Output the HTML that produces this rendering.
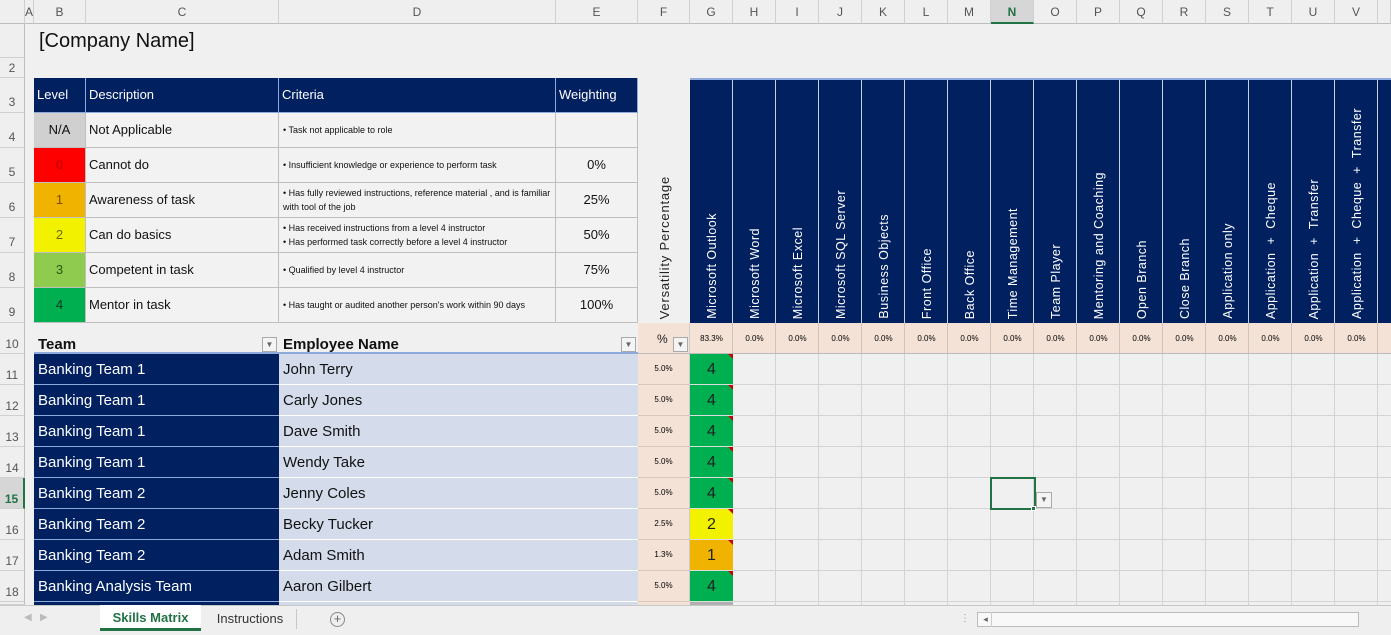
<!DOCTYPE html>
<html><head><meta charset="utf-8"><style>
*{margin:0;padding:0;box-sizing:border-box}
body{width:1391px;height:635px;overflow:hidden;background:#f0f0f0;font-family:"Liberation Sans",sans-serif;position:relative}
.c{position:absolute;overflow:hidden;white-space:nowrap}
.hd{top:0;height:24px;background:#efefef;border-right:1px solid #d0d0d0;border-bottom:1px solid #bdbdbd;color:#555;font-size:12px;text-align:center;line-height:24px}
.rh{left:0;width:25px;background:#efefef;border-bottom:1px solid #d0d0d0;border-right:1px solid #bdbdbd;color:#555;font-size:12px;text-align:center;padding-top:14px}
.nv{background:#002060;color:#fff}
.lg{border-right:1px solid #bfbfbf;border-bottom:1px solid #bfbfbf;font-size:13px;line-height:34px;padding-left:3px;background:#f2f2f2;color:#111}
.cr{font-size:9px;line-height:14px;padding:3px 4px;white-space:normal;display:flex;flex-direction:column;justify-content:center}
.vh{writing-mode:vertical-rl;transform:rotate(180deg);font-size:12.5px;letter-spacing:0.5px;color:#fff;padding-top:4px;text-align:left;white-space:nowrap;display:block}
.tm{background:#002060;color:#fff;font-size:15px;padding-left:4px;line-height:32px;border-bottom:1px solid #8ea9db}
.em{background:#d4dcec;color:#111;font-size:15px;padding-left:4px;line-height:32px;border-bottom:1px solid #fff}
.pc{background:#f4e2d6;font-size:8px;text-align:center;line-height:30px;border-right:1px solid #ccc;border-bottom:1px solid #d8c8bc}
.sk{font-size:16px;text-align:center;line-height:32px;border-bottom:1px solid #ddd;color:#222}
.tri:after{content:"";position:absolute;right:0;top:0;border-top:5px solid #c00;border-left:5px solid transparent}
</style></head><body>
<div class="c hd" style="left:0;width:25px"></div>
<div class="c hd" style="left:25px;width:9px">A</div>
<div class="c hd" style="left:34px;width:52px">B</div>
<div class="c hd" style="left:86px;width:193px">C</div>
<div class="c hd" style="left:279px;width:277px">D</div>
<div class="c hd" style="left:556px;width:82px">E</div>
<div class="c hd" style="left:638px;width:52px">F</div>
<div class="c hd" style="left:690px;width:43px">G</div>
<div class="c hd" style="left:733px;width:43px">H</div>
<div class="c hd" style="left:776px;width:43px">I</div>
<div class="c hd" style="left:819px;width:43px">J</div>
<div class="c hd" style="left:862px;width:43px">K</div>
<div class="c hd" style="left:905px;width:43px">L</div>
<div class="c hd" style="left:948px;width:43px">M</div>
<div class="c hd" style="left:991px;width:43px;background:#d6d6d6;color:#217346;font-weight:bold;border-bottom:2px solid #217346">N</div>
<div class="c hd" style="left:1034px;width:43px">O</div>
<div class="c hd" style="left:1077px;width:43px">P</div>
<div class="c hd" style="left:1120px;width:43px">Q</div>
<div class="c hd" style="left:1163px;width:43px">R</div>
<div class="c hd" style="left:1206px;width:43px">S</div>
<div class="c hd" style="left:1249px;width:43px">T</div>
<div class="c hd" style="left:1292px;width:43px">U</div>
<div class="c hd" style="left:1335px;width:43px">V</div>
<div class="c hd" style="left:1378px;width:13px"></div>
<div class="c rh" style="top:24px;height:34px;padding-top:0"></div>
<div class="c rh" style="top:58px;height:20px;padding-top:3px">2</div>
<div class="c rh" style="top:78px;height:35px;padding-top:17px">3</div>
<div class="c rh" style="top:113px;height:35px;padding-top:17px">4</div>
<div class="c rh" style="top:148px;height:35px;padding-top:17px">5</div>
<div class="c rh" style="top:183px;height:35px;padding-top:17px">6</div>
<div class="c rh" style="top:218px;height:35px;padding-top:17px">7</div>
<div class="c rh" style="top:253px;height:35px;padding-top:17px">8</div>
<div class="c rh" style="top:288px;height:35px;padding-top:17px">9</div>
<div class="c rh" style="top:323px;height:31px">10</div>
<div class="c rh" style="top:354px;height:31px">11</div>
<div class="c rh" style="top:385px;height:31px">12</div>
<div class="c rh" style="top:416px;height:31px">13</div>
<div class="c rh" style="top:447px;height:31px">14</div>
<div class="c rh" style="top:478px;height:31px;background:#d6d6d6;color:#217346;font-weight:bold;border-right:2px solid #217346">15</div>
<div class="c rh" style="top:509px;height:31px">16</div>
<div class="c rh" style="top:540px;height:31px">17</div>
<div class="c rh" style="top:571px;height:31px">18</div>
<div class="c rh" style="top:602px;height:3px;padding:0"></div>

<div class="c" style="left:39px;top:30px;font-size:20px;color:#111">[Company Name]</div>

<div class="c" style="left:34px;top:78px;width:604px;height:245px;border-left:1px solid #bfbfbf"></div>
<div class="c lg" style="left:34px;top:78px;width:52px;height:35px;background:#002060;color:#fff;border-color:#8ea9db">Level</div>
<div class="c lg" style="left:86px;top:78px;width:193px;height:35px;background:#002060;color:#fff;border-color:#8ea9db">Description</div>
<div class="c lg" style="left:279px;top:78px;width:277px;height:35px;background:#002060;color:#fff;border-color:#8ea9db">Criteria</div>
<div class="c lg" style="left:556px;top:78px;width:82px;height:35px;background:#002060;color:#fff;border-color:#8ea9db">Weighting</div>

<div class="c lg" style="left:34px;top:113px;width:52px;height:35px;background:#d0d0d0;text-align:center;padding:0">N/A</div>
<div class="c lg" style="left:86px;top:113px;width:193px;height:35px">Not Applicable</div>
<div class="c lg cr" style="left:279px;top:113px;width:277px;height:35px">• Task not applicable to role</div>
<div class="c lg" style="left:556px;top:113px;width:82px;height:35px"></div>

<div class="c lg" style="left:34px;top:148px;width:52px;height:35px;background:#ff0000;color:#c00000;text-align:center;padding:0">0</div>
<div class="c lg" style="left:86px;top:148px;width:193px;height:35px">Cannot do</div>
<div class="c lg cr" style="left:279px;top:148px;width:277px;height:35px">• Insufficient knowledge or experience to perform task</div>
<div class="c lg" style="left:556px;top:148px;width:82px;height:35px;text-align:center;padding:0">0%</div>

<div class="c lg" style="left:34px;top:183px;width:52px;height:35px;background:#f0b400;color:#7a4a00;text-align:center;padding:0">1</div>
<div class="c lg" style="left:86px;top:183px;width:193px;height:35px">Awareness of task</div>
<div class="c lg cr" style="left:279px;top:183px;width:277px;height:35px">• Has fully reviewed instructions, reference material , and is familiar with tool of the job</div>
<div class="c lg" style="left:556px;top:183px;width:82px;height:35px;text-align:center;padding:0">25%</div>

<div class="c lg" style="left:34px;top:218px;width:52px;height:35px;background:#f2f200;color:#6a6a00;text-align:center;padding:0">2</div>
<div class="c lg" style="left:86px;top:218px;width:193px;height:35px">Can do basics</div>
<div class="c lg cr" style="left:279px;top:218px;width:277px;height:35px"><span>• Has received instructions from a level 4 instructor</span><span>• Has performed task correctly before a level 4 instructor</span></div>
<div class="c lg" style="left:556px;top:218px;width:82px;height:35px;text-align:center;padding:0">50%</div>

<div class="c lg" style="left:34px;top:253px;width:52px;height:35px;background:#8fcb4f;color:#2a5a10;text-align:center;padding:0">3</div>
<div class="c lg" style="left:86px;top:253px;width:193px;height:35px">Competent in task</div>
<div class="c lg cr" style="left:279px;top:253px;width:277px;height:35px">• Qualified by level 4 instructor</div>
<div class="c lg" style="left:556px;top:253px;width:82px;height:35px;text-align:center;padding:0">75%</div>

<div class="c lg" style="left:34px;top:288px;width:52px;height:35px;background:#00b050;color:#0a3a1a;text-align:center;padding:0">4</div>
<div class="c lg" style="left:86px;top:288px;width:193px;height:35px">Mentor in task</div>
<div class="c lg cr" style="left:279px;top:288px;width:277px;height:35px">• Has taught or audited another person's work within 90 days</div>
<div class="c lg" style="left:556px;top:288px;width:82px;height:35px;text-align:center;padding:0">100%</div>

<div class="c" style="left:638px;top:78px;width:52px;height:245px;display:flex;justify-content:center;align-items:flex-end"><span class="vh" style="color:#222;font-size:13px;letter-spacing:0.8px">Versatility Percentage</span></div>
<div class="c nv" style="left:690px;top:78px;width:701px;height:245px;border-top:2px solid #8ea9db;background:repeating-linear-gradient(90deg,#002060 0 42px,#c8d0e0 42px 43px)"></div>
<div class="c" style="left:690px;top:80px;width:43px;height:243px;display:flex;justify-content:center;align-items:flex-end"><span class="vh">Microsoft Outlook</span></div>
<div class="c" style="left:733px;top:80px;width:43px;height:243px;display:flex;justify-content:center;align-items:flex-end"><span class="vh">Microsoft Word</span></div>
<div class="c" style="left:776px;top:80px;width:43px;height:243px;display:flex;justify-content:center;align-items:flex-end"><span class="vh">Microsoft Excel</span></div>
<div class="c" style="left:819px;top:80px;width:43px;height:243px;display:flex;justify-content:center;align-items:flex-end"><span class="vh">Microsoft SQL Server</span></div>
<div class="c" style="left:862px;top:80px;width:43px;height:243px;display:flex;justify-content:center;align-items:flex-end"><span class="vh">Business Objects</span></div>
<div class="c" style="left:905px;top:80px;width:43px;height:243px;display:flex;justify-content:center;align-items:flex-end"><span class="vh">Front Office</span></div>
<div class="c" style="left:948px;top:80px;width:43px;height:243px;display:flex;justify-content:center;align-items:flex-end"><span class="vh">Back Office</span></div>
<div class="c" style="left:991px;top:80px;width:43px;height:243px;display:flex;justify-content:center;align-items:flex-end"><span class="vh">Time Management</span></div>
<div class="c" style="left:1034px;top:80px;width:43px;height:243px;display:flex;justify-content:center;align-items:flex-end"><span class="vh">Team Player</span></div>
<div class="c" style="left:1077px;top:80px;width:43px;height:243px;display:flex;justify-content:center;align-items:flex-end"><span class="vh">Mentoring and Coaching</span></div>
<div class="c" style="left:1120px;top:80px;width:43px;height:243px;display:flex;justify-content:center;align-items:flex-end"><span class="vh">Open Branch</span></div>
<div class="c" style="left:1163px;top:80px;width:43px;height:243px;display:flex;justify-content:center;align-items:flex-end"><span class="vh">Close Branch</span></div>
<div class="c" style="left:1206px;top:80px;width:43px;height:243px;display:flex;justify-content:center;align-items:flex-end"><span class="vh">Application only</span></div>
<div class="c" style="left:1249px;top:80px;width:43px;height:243px;display:flex;justify-content:center;align-items:flex-end"><span class="vh">Application &nbsp;+ &nbsp;Cheque</span></div>
<div class="c" style="left:1292px;top:80px;width:43px;height:243px;display:flex;justify-content:center;align-items:flex-end"><span class="vh">Application &nbsp;+ &nbsp;Transfer</span></div>
<div class="c" style="left:1335px;top:80px;width:43px;height:243px;display:flex;justify-content:center;align-items:flex-end"><span class="vh">Application &nbsp;+ &nbsp;Cheque &nbsp;+ &nbsp;Transfer</span></div>

<div class="c" style="left:34px;top:323px;width:604px;height:31px;border-bottom:2px solid #8ea9db"></div>
<div class="c" style="left:38px;top:336px;font-size:15px;font-weight:bold;color:#111">Team</div>
<div class="c" style="left:262px;top:337px;width:15px;height:15px;border:1px solid #aaa;background:#f4f4f4;font-size:8px;text-align:center;line-height:13px;color:#666">▼</div>
<div class="c" style="left:283px;top:336px;font-size:15px;font-weight:bold;color:#111">Employee Name</div>
<div class="c" style="left:621px;top:337px;width:15px;height:15px;border:1px solid #aaa;background:#f4f4f4;font-size:8px;text-align:center;line-height:13px;color:#666">▼</div>
<div class="c" style="left:690px;top:323px;width:701px;height:31px;background:repeating-linear-gradient(90deg,#f4e2d6 0 42px,#cfc3bb 42px 43px);border-bottom:1px solid #bbb"></div>
<div class="c" style="left:638px;top:323px;width:52px;height:31px;background:#f4e2d6;border-right:1px solid #ccc;border-bottom:1px solid #bbb"></div>
<div class="c" style="left:657px;top:332px;font-size:12px;color:#222">%</div>
<div class="c" style="left:673px;top:337px;width:15px;height:15px;border:1px solid #aaa;background:#f4f4f4;font-size:8px;text-align:center;line-height:13px;color:#666">▼</div>
<div class="c" style="left:690px;top:323px;width:43px;height:31px;font-size:8px;text-align:center;line-height:31px">83.3%</div>
<div class="c" style="left:733px;top:323px;width:645px;height:31px;display:flex;font-size:8px;line-height:31px"><span style="width:43px;text-align:center">0.0%</span><span style="width:43px;text-align:center">0.0%</span><span style="width:43px;text-align:center">0.0%</span><span style="width:43px;text-align:center">0.0%</span><span style="width:43px;text-align:center">0.0%</span><span style="width:43px;text-align:center">0.0%</span><span style="width:43px;text-align:center">0.0%</span><span style="width:43px;text-align:center">0.0%</span><span style="width:43px;text-align:center">0.0%</span><span style="width:43px;text-align:center">0.0%</span><span style="width:43px;text-align:center">0.0%</span><span style="width:43px;text-align:center">0.0%</span><span style="width:43px;text-align:center">0.0%</span><span style="width:43px;text-align:center">0.0%</span><span style="width:43px;text-align:center">0.0%</span></div>

<div class="c" style="left:733px;top:354px;width:658px;height:251px;background:repeating-linear-gradient(90deg,transparent 0 42px,#d4d4d4 42px 43px),repeating-linear-gradient(180deg,transparent 0 30px,#d4d4d4 30px 31px)"></div>

<div class="c tm" style="left:34px;top:354px;width:245px;height:31px">Banking Team 1</div>
<div class="c em" style="left:279px;top:354px;width:359px;height:31px">John Terry</div>
<div class="c pc" style="left:638px;top:354px;width:52px;height:31px">5.0%</div>
<div class="c sk tri" style="left:690px;top:354px;width:43px;height:31px;background:#00b050">4</div>

<div class="c tm" style="left:34px;top:385px;width:245px;height:31px">Banking Team 1</div>
<div class="c em" style="left:279px;top:385px;width:359px;height:31px">Carly Jones</div>
<div class="c pc" style="left:638px;top:385px;width:52px;height:31px">5.0%</div>
<div class="c sk tri" style="left:690px;top:385px;width:43px;height:31px;background:#00b050">4</div>

<div class="c tm" style="left:34px;top:416px;width:245px;height:31px">Banking Team 1</div>
<div class="c em" style="left:279px;top:416px;width:359px;height:31px">Dave Smith</div>
<div class="c pc" style="left:638px;top:416px;width:52px;height:31px">5.0%</div>
<div class="c sk tri" style="left:690px;top:416px;width:43px;height:31px;background:#00b050">4</div>

<div class="c tm" style="left:34px;top:447px;width:245px;height:31px">Banking Team 1</div>
<div class="c em" style="left:279px;top:447px;width:359px;height:31px">Wendy Take</div>
<div class="c pc" style="left:638px;top:447px;width:52px;height:31px">5.0%</div>
<div class="c sk tri" style="left:690px;top:447px;width:43px;height:31px;background:#00b050">4</div>

<div class="c tm" style="left:34px;top:478px;width:245px;height:31px">Banking Team 2</div>
<div class="c em" style="left:279px;top:478px;width:359px;height:31px">Jenny Coles</div>
<div class="c pc" style="left:638px;top:478px;width:52px;height:31px">5.0%</div>
<div class="c sk tri" style="left:690px;top:478px;width:43px;height:31px;background:#00b050">4</div>

<div class="c tm" style="left:34px;top:509px;width:245px;height:31px">Banking Team 2</div>
<div class="c em" style="left:279px;top:509px;width:359px;height:31px">Becky Tucker</div>
<div class="c pc" style="left:638px;top:509px;width:52px;height:31px">2.5%</div>
<div class="c sk tri" style="left:690px;top:509px;width:43px;height:31px;background:#f2f200">2</div>

<div class="c tm" style="left:34px;top:540px;width:245px;height:31px">Banking Team 2</div>
<div class="c em" style="left:279px;top:540px;width:359px;height:31px">Adam Smith</div>
<div class="c pc" style="left:638px;top:540px;width:52px;height:31px">1.3%</div>
<div class="c sk tri" style="left:690px;top:540px;width:43px;height:31px;background:#f0b400">1</div>

<div class="c tm" style="left:34px;top:571px;width:245px;height:31px">Banking Analysis Team</div>
<div class="c em" style="left:279px;top:571px;width:359px;height:31px">Aaron Gilbert</div>
<div class="c pc" style="left:638px;top:571px;width:52px;height:31px">5.0%</div>
<div class="c sk tri" style="left:690px;top:571px;width:43px;height:31px;background:#00b050">4</div>

<div class="c" style="left:34px;top:602px;width:245px;height:3px;background:#002060"></div>
<div class="c" style="left:279px;top:602px;width:359px;height:3px;background:#d4dcec"></div>
<div class="c" style="left:638px;top:602px;width:52px;height:3px;background:#f4e2d6"></div>
<div class="c" style="left:690px;top:602px;width:43px;height:3px;background:#b0b0b0"></div>

<div class="c" style="left:990px;top:477px;width:46px;height:33px;border:2px solid #217346"></div>
<div class="c" style="left:1031px;top:506px;width:5px;height:5px;background:#217346;border:1px solid #fff"></div>
<div class="c" style="left:1036px;top:492px;width:16px;height:16px;border:1px solid #aaa;background:#f4f4f4;font-size:8px;text-align:center;line-height:14px;color:#666">▼</div>

<div class="c" style="left:0;top:605px;width:1391px;height:30px;background:#efefef;border-top:1px solid #c8c8c8"></div>
<div class="c" style="left:24px;top:612px;font-size:10px;color:#bbb">◀ &nbsp; ▶</div>
<div class="c" style="left:100px;top:605px;width:101px;height:26px;background:#fff;border-bottom:3px solid #217346;font-size:13px;font-weight:bold;color:#217346;text-align:center;line-height:26px">Skills Matrix</div>
<div class="c" style="left:205px;top:605px;width:90px;height:28px;font-size:13px;color:#333;text-align:center;line-height:28px">Instructions</div>
<div class="c" style="left:296px;top:609px;width:1px;height:20px;background:#c8c8c8"></div>
<div class="c" style="left:330px;top:612px;width:15px;height:15px;border:1px solid #888;border-radius:50%;font-size:13px;color:#666;text-align:center;line-height:12px">+</div>
<div class="c" style="left:960px;top:613px;font-size:10px;color:#999">⋮</div>
<div class="c" style="left:977px;top:612px;width:382px;height:15px;border:1px solid #bbb;background:#f8f8f8"></div>
<div class="c" style="left:980px;top:612px;width:12px;height:15px;border-right:1px solid #ccc;font-size:9px;color:#666;line-height:15px;text-align:center">◂</div>
</body></html>
